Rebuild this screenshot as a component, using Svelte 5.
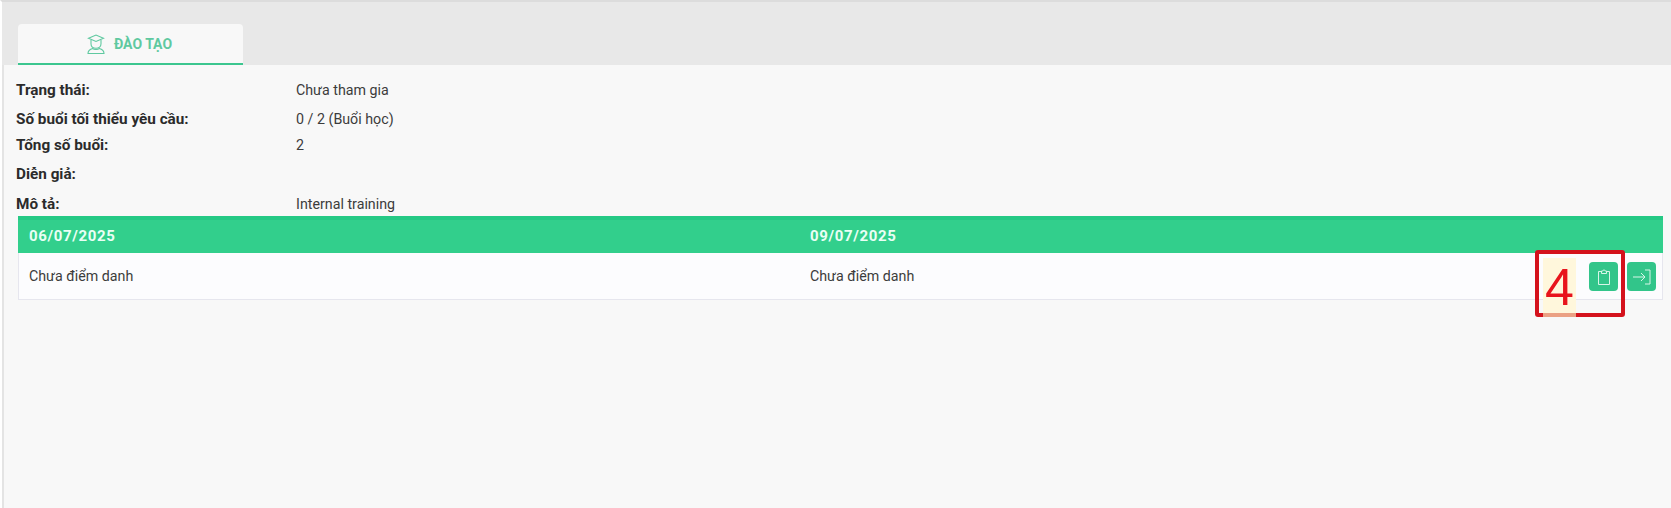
<script>
  const rows = [
    { label: 'Trạng thái:', value: 'Chưa tham gia', cls: 'r1' },
    { label: 'Số buổi tối thiểu yêu cầu:', value: '0 / 2 (Buổi học)', cls: 'r2' },
    { label: 'Tổng số buổi:', value: '2', cls: 'r3' },
    { label: 'Diễn giả:', value: '', cls: 'r4' },
    { label: 'Mô tả:', value: 'Internal training', cls: 'r5' }
  ];
</script>

<div class="page">
  <div class="tabs">
    <div class="tab">
      <svg width="18" height="20" viewBox="0 0 18 20" fill="none" stroke="#5fc9a0" stroke-width="1.1">
        <path d="M1.500 4.200 9 1l7.500 3.200L9 7.400z" />
        <path d="M4 6v3.800c0 3 2 4.500 5 4.500s5-1.500 5-4.500V6" />
        <path d="M1 19.500c0-2.800 1.800-4.300 4.800-5 1 1.400 5.400 1.400 6.400 0 3 .7 4.800 2.200 4.800 5z" />
      </svg>
      <span>ĐÀO TẠO</span>
    </div>
  </div>

  <div class="info">
    {#each rows as r}
      <div class="row {r.cls}">
        <div class="label">{r.label}</div>
        <div class="value">{r.value}</div>
      </div>
    {/each}
  </div>

  <div class="table">
    <div class="thead">
      <div class="col">06/07/2025</div>
      <div class="col">09/07/2025</div>
    </div>
    <div class="tbody">
      <div class="col">Chưa điểm danh</div>
      <div class="col">Chưa điểm danh</div>
      <div class="actions">
        <button class="btn" aria-label="clipboard">
          <svg width="16" height="18" viewBox="0 0 16 18" fill="none" stroke="#d8f5e8" stroke-width="1">
            <path d="M5.500 3.500H2.500v13h11v-13h-3" />
            <path d="M5.500 5.500V3h1.300C7 1.500 9 1.500 9.200 3h1.300v2.500z" />
          </svg>
        </button>
        <button class="btn" aria-label="enter">
          <svg width="20" height="18" viewBox="0 0 20 18" fill="none" stroke="#d8f5e8" stroke-width="1">
            <path d="M1 9h12M9 5l4 4-4 4" />
            <path d="M13 2h5v14h-5" />
          </svg>
        </button>
      </div>
      <div class="marker">
        <span class="num">4</span>
        <span class="tint"></span>
      </div>
    </div>
  </div>
</div>

<style>
  :global(body) {
    margin: 0;
    background: #f8f8f8;
  }
  .page {
    box-sizing: border-box;
    height: 508px;
    overflow: hidden;
    background: #f8f8f8;
    border-top: 2px solid #dcdcdc;
    border-left: 2px solid #fff;
    box-shadow: inset 2px 0 0 #e4e4e4;
    font-family: Roboto, "Liberation Sans", sans-serif;
    color: #333;
    font-size: 14.250px;
  }
  .tabs {
    height: 63px;
    background: #e8e8e8;
    padding: 22px 0 0 16px;
    box-sizing: border-box;
  }
  .tab {
    box-sizing: border-box;
    width: 225px;
    height: 41px;
    background: #f8f8f8;
    border-radius: 4px 4px 0 0;
    border-bottom: 2px solid #3cc68f;
    display: flex;
    align-items: center;
    justify-content: center;
    gap: 9px;
    color: #5fc9a0;
    font-weight: 700;
    font-size: 14px;
    padding-right: 2px;
  }
  .info {
    padding: 15px 0 0 14px;
    height: 151px;
    box-sizing: border-box;
  }
  .row {
    display: flex;
    align-items: center;
    height: 20px;
  }
  .r2 { margin-top: 9px; }
  .r3 { margin-top: 6px; }
  .r4 { margin-top: 9px; }
  .r5 { margin-top: 10px; }
  .label {
    width: 280px;
    font-weight: 700;
    font-size: 15.300px;
    color: #2b2b2b;
  }
  .value {
    color: #3c3c3c;
  }
  .table {
    margin: 0 8px 0 16px;
  }
  .thead {
    box-sizing: border-box;
    height: 37px;
    background: #32cf8c;
    border-top: 4px solid #25c985;
    padding-bottom: 2px;
    display: flex;
    align-items: center;
    color: #eafff5;
    font-weight: 700;
    font-size: 15px;
    letter-spacing: 0.65px;
  }
  .thead .col:first-child {
    width: 781px;
  }
  .tbody {
    box-sizing: border-box;
    height: 47px;
    background: #fcfcfe;
    border: 1px solid #e6e6ee;
    border-top: 0;
    display: flex;
    align-items: center;
    position: relative;
    color: #3c3c3c;
  }
  .col {
    width: 782px;
    flex: none;
    padding-left: 11px;
    box-sizing: border-box;
  }
  .tbody .col:first-child {
    padding-left: 10px;
    width: 780px;
  }
  .actions {
    margin-left: auto;
    display: flex;
    gap: 9px;
    margin-right: 6px;
    margin-top: 1px;
  }
  .btn {
    width: 29px;
    height: 29px;
    padding: 0;
    border: 0;
    border-radius: 4px;
    background: #32c58a;
    display: flex;
    align-items: center;
    justify-content: center;
  }
  .marker {
    position: absolute;
    left: 1516px;
    top: -3px;
    width: 90px;
    height: 67px;
    box-sizing: border-box;
    border: 4px solid #d4121c;
    border-radius: 3px;
    pointer-events: none;
  }
  .marker::before {
    content: "";
    position: absolute;
    left: 4px;
    top: 4px;
    width: 33px;
    height: 55px;
    background: #fff7dc;
  }
  .tint {
    position: absolute;
    left: 4px;
    bottom: -4px;
    width: 33px;
    height: 4px;
    background: #eba184;
  }
  .num {
    position: absolute;
    left: 6px;
    top: 4px;
    font-family: "Liberation Sans", sans-serif;
    font-size: 52px;
    line-height: 58px;
    color: #e8141c;
    z-index: 1;
  }
</style>
